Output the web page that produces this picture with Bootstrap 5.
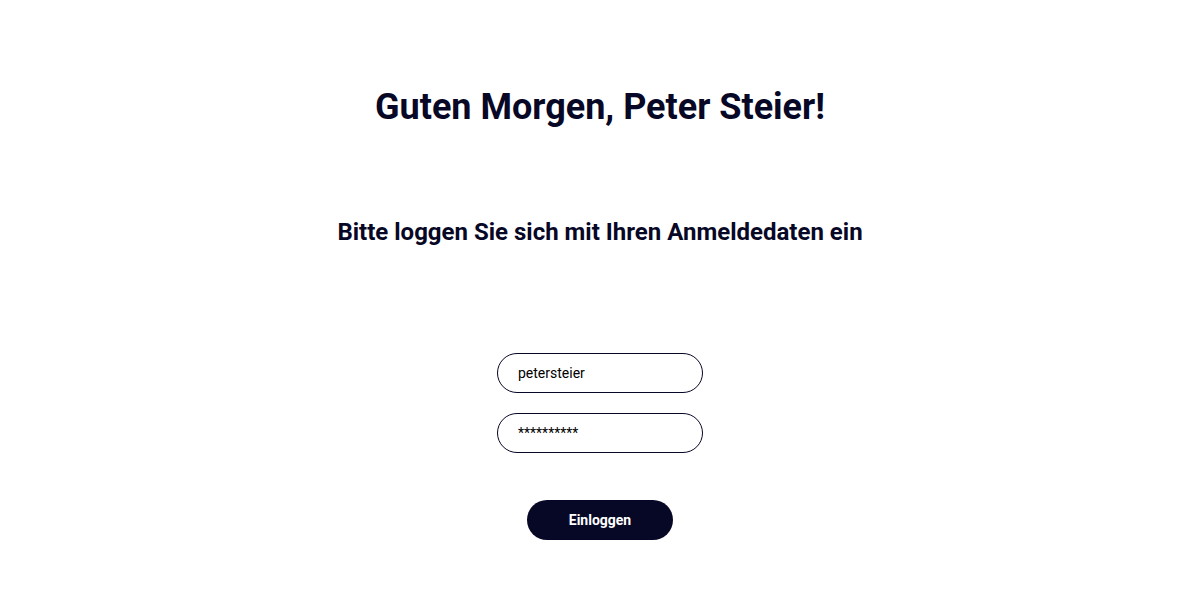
<!DOCTYPE html>
<html lang="de">
<head>
<meta charset="utf-8">
<meta name="viewport" content="width=device-width, initial-scale=1">
<title>Login</title>
<link href="https://cdn.jsdelivr.net/npm/bootstrap@5.3.0/dist/css/bootstrap.min.css" rel="stylesheet">
<style>
  body { font-family: Roboto, sans-serif; color: #070726; background: #fff; }
  .login-page { padding-top: 86px; padding-bottom: 60px; }
  .greeting { font-size: 36px; line-height: 42px; margin-bottom: 90px; }
  .prompt { font-size: 24px; line-height: 28px; margin-bottom: 107px; }
  .login-form { gap: 20px; }
  .login-field { width: 206px; height: 40px; padding: 0 20px; font-size: 14px; line-height: 20px; color: #000; border: 1px solid #070726; border-radius: 20px; }
  .login-field:focus { color: #000; border-color: #070726; }
  .login-btn { width: 146px; height: 40px; margin-top: 27px; padding: 0; font-size: 14px; line-height: 20px; --bs-btn-color: #fff; --bs-btn-bg: #070726; --bs-btn-hover-color: #fff; --bs-btn-hover-bg: #1c1f4a; --bs-btn-active-color: #fff; --bs-btn-active-bg: #1c1f4a; }
</style>
</head>
<body>
<main class="container login-page text-center">
  <h1 class="greeting fw-bold">Guten Morgen, Peter Steier!</h1>
  <h2 class="prompt fw-bold">Bitte loggen Sie sich mit Ihren Anmeldedaten ein</h2>
  <form class="login-form d-flex flex-column align-items-center">
    <input class="form-control login-field" type="text" id="username" aria-label="Benutzername" value="petersteier" autocomplete="username">
    <input class="form-control login-field" type="text" id="password" aria-label="Passwort" value="**********" autocomplete="off">
    <button class="btn rounded-pill fw-bold login-btn" type="submit">Einloggen</button>
  </form>
</main>
<script src="https://cdn.jsdelivr.net/npm/bootstrap@5.3.0/dist/js/bootstrap.bundle.min.js"></script>
</body>
</html>
